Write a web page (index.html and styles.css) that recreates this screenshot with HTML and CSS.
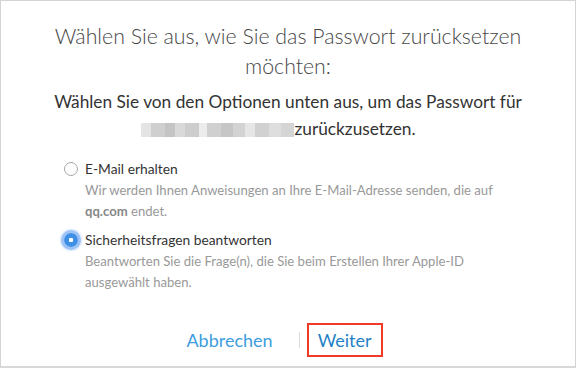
FILE: index.html
```html
<!DOCTYPE html>
<html lang="de">
<head>
<meta charset="utf-8">
<link rel="stylesheet" href="styles.css">
</head>
<body>
<div class="dialog">
  <h1 class="title">Wählen Sie aus, wie Sie das Passwort zurücksetzen möchten:</h1>
  <p class="subtitle">Wählen Sie von den Optionen unten aus, um das Passwort für <span class="blur"></span><span class="tail">zurückzusetzen.</span></p>
  <div class="options">
    <div class="option">
      <span class="radio"></span>
      <div class="option-body">
        <div class="label">E-Mail erhalten</div>
        <div class="desc">Wir werden Ihnen Anweisungen an Ihre E-Mail-Adresse senden, die auf <b>qq.com</b> endet.</div>
      </div>
    </div>
    <div class="option">
      <span class="radio checked"></span>
      <div class="option-body">
        <div class="label">Sicherheitsfragen beantworten</div>
        <div class="desc">Beantworten Sie die Frage(n), die Sie beim Erstellen Ihrer Apple-ID ausgewählt haben.</div>
      </div>
    </div>
  </div>
  <div class="actions">
    <span class="btn cancel">Abbrechen</span>
    <span class="sep"></span>
    <span class="btn next">Weiter</span>
  </div>
</div>
</body>
</html>
```
FILE: styles.css
```css
html, body {
  margin: 0;
  padding: 0;
  background: #ffffff;
}
body {
  width: 577px;
  height: 369px;
  overflow: hidden;
  font-family: Lato, "Open Sans", sans-serif;
}
.dialog {
  box-sizing: border-box;
  width: 576px;
  height: 368px;
  border: 1px solid #d4d4d4;
  border-bottom: 2px solid #d8d8d8;
  display: flex;
  flex-direction: column;
  align-items: center;
  padding-top: 20px;
}
.title {
  margin: 0;
  width: 500px;
  text-align: center;
  font-size: 21.3px;
  font-weight: 300;
  line-height: 30px;
  color: #474747;
}
.subtitle {
  margin: 7px 0 0;
  width: 500px;
  text-align: center;
  font-size: 17.3px;
  line-height: 27px;
  color: #333;
}
.blur {
  display: inline-block;
  width: 153px;
  height: 14px;
  vertical-align: -2px;
  background: linear-gradient(to right,
    #e4e4e4 0 10px, #cfcfcf 10px 24px, #c4c4c4 24px 34px, #d9d9d9 34px 44px,
    #cdcdcd 44px 58px, #ececec 58px 66px, #d0d0d0 66px 80px, #c6c6c6 80px 92px,
    #d3d3d3 92px 104px, #e6e6e6 104px 114px, #d1d1d1 114px 128px, #dedede 128px 140px, #d5d5d5 140px 153px);
}
.tail {
  padding-right: 19px;
}
.options {
  align-self: stretch;
  padding: 15px 0 0 63px;
  display: flex;
  flex-direction: column;
  gap: 6px;
}
.option {
  display: flex;
  align-items: flex-start;
  gap: 7px;
}
.radio {
  flex: none;
  box-sizing: border-box;
  width: 14px;
  height: 14px;
  margin-top: 5px;
  border: 1px solid #a8a8a8;
  border-radius: 50%;
  background: #fff;
}
.radio.checked {
  border: none;
  background: radial-gradient(circle, #fff 0 2px, #3f8fe6 2.5px);
  box-shadow: 0 0 0 3px rgba(100, 160, 240, 0.5), 0 0 2px 4px rgba(120, 175, 245, 0.3);
}
.label {
  font-size: 13.8px;
  line-height: 23px;
  color: #333;
}
.desc {
  width: 445px;
  font-size: 13.1px;
  line-height: 21px;
  color: #999;
}
.desc b {
  color: #888;
  font-weight: 700;
}
.actions {
  margin-top: auto;
  margin-bottom: 9px;
  margin-left: -7px;
  display: flex;
  align-items: center;
}
.btn {
  font-size: 18px;
  line-height: 24px;
}
.cancel {
  color: #3d9ddd;
  margin-right: 26px;
}
.sep {
  width: 1px;
  height: 16px;
  background: #dcdcdc;
}
.next {
  margin-left: 7px;
  color: #1f7fc6;
  border: 2px solid #f03a2a;
  padding: 3px 9px 3px;
}
```
